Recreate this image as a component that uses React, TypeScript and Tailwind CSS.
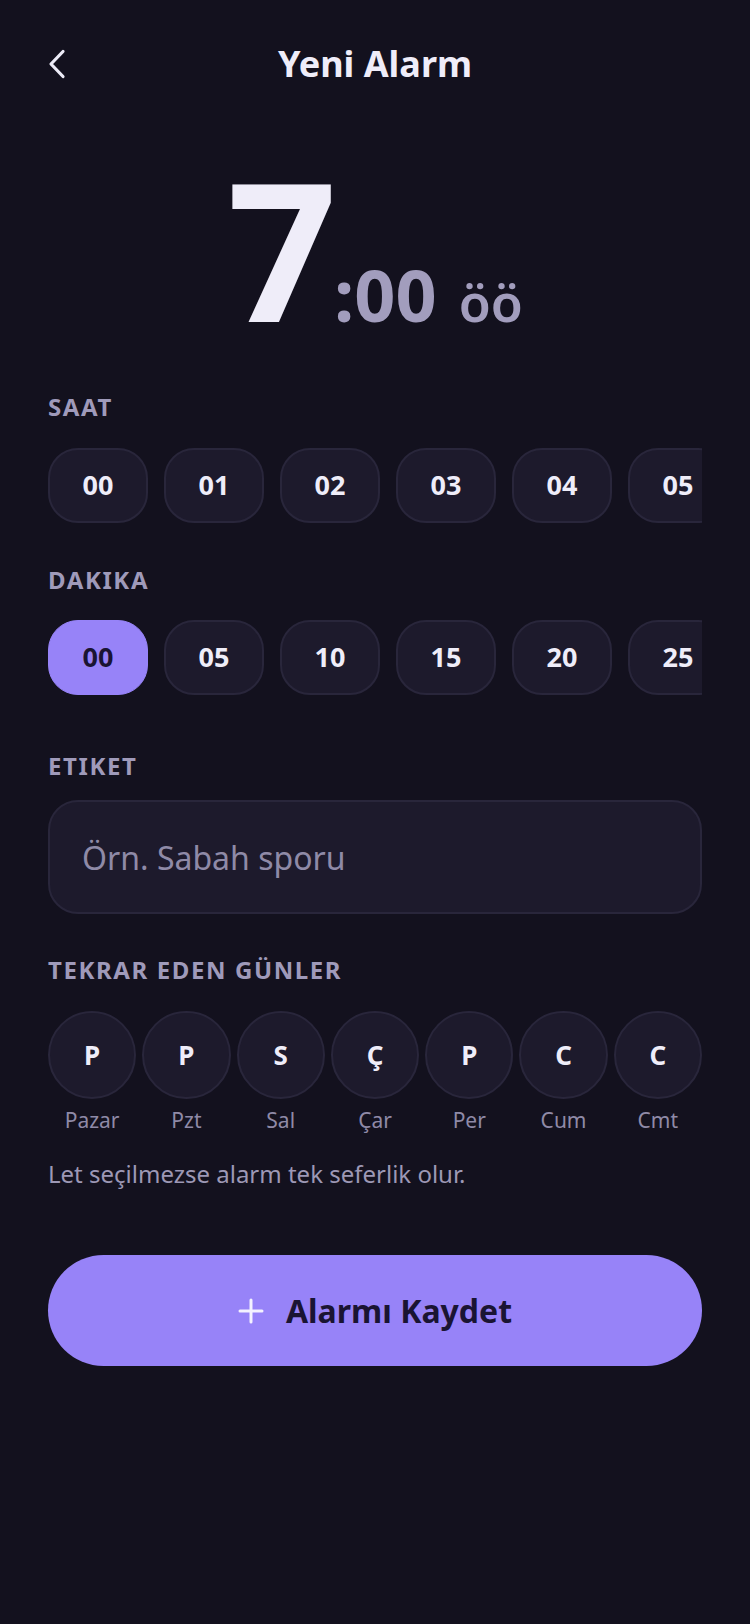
import { useState } from "react";

const HOURS = ["00", "01", "02", "03", "04", "05", "06", "07"];
const MINUTES = ["00", "05", "10", "15", "20", "25", "30", "35"];
const DAYS = [
  { short: "P", label: "Pazar" },
  { short: "P", label: "Pzt" },
  { short: "S", label: "Sal" },
  { short: "Ç", label: "Çar" },
  { short: "P", label: "Per" },
  { short: "C", label: "Cum" },
  { short: "C", label: "Cmt" },
];

function SectionLabel({ children }: { children: React.ReactNode }) {
  return (
    <div className="text-[24px] leading-none font-bold tracking-[1.6px] text-[#9f9aba]">
      {children}
    </div>
  );
}

function ChipRow({
  items,
  selected,
  onSelect,
}: {
  items: string[];
  selected: string | null;
  onSelect: (v: string) => void;
}) {
  return (
    <div className="flex gap-4 overflow-hidden">
      {items.map((item) => {
        const active = item === selected;
        return (
          <button
            key={item}
            onClick={() => onSelect(item)}
            className={
              active
                ? "shrink-0 w-[100px] h-[75px] rounded-[30px] bg-[#9783f8] border border-[#9783f8] text-[27px] font-bold text-[#1a1433] flex items-center justify-center"
                : "shrink-0 w-[100px] h-[75px] rounded-[30px] bg-[#1d1a2c] border-2 border-[#29263b] text-[27px] font-bold text-[#efedf9] flex items-center justify-center"
            }
          >
            {item}
          </button>
        );
      })}
    </div>
  );
}

export default function App() {
  const [hour, setHour] = useState<string | null>(null);
  const [minute, setMinute] = useState<string | null>("00");
  const [label, setLabel] = useState("");
  const [days, setDays] = useState<number[]>([]);

  const toggleDay = (i: number) =>
    setDays((d) => (d.includes(i) ? d.filter((x) => x !== i) : [...d, i]));

  return (
    <main
      className="min-h-[1624px] bg-[#13111e] px-12"
      style={{ fontFamily: '"Noto Sans", "Open Sans", sans-serif' }}
    >
      {/* Header */}
      <div className="pt-9 h-[92px] grid grid-cols-[1fr_auto_1fr] items-center">
        <button className="justify-self-start h-[56px] flex items-center">
          <svg width="18" height="30" viewBox="0 0 18 30" fill="none">
            <path
              d="M15 2.5 L3 15 L15 27.5"
              stroke="#ecebf7"
              strokeWidth="3.2"
              strokeLinecap="round"
              strokeLinejoin="round"
            />
          </svg>
        </button>
        <h1 className="h-[56px] flex items-center text-[36px] leading-none font-bold text-[#efedf9]">
          Yeni Alarm
        </h1>
        <div />
      </div>

      {/* Time */}
      <div className="mt-[60px] flex items-baseline justify-center text-[#a29dbd]">
        <span className="text-[192px] leading-none font-bold text-[#efedf9]">7</span>
        <span className="ml-[-3px] text-[72px] leading-none font-bold">:{minute ?? "00"}</span>
        <span className="ml-[22px] text-[52px] leading-none font-semibold">öö</span>
      </div>

      {/* Hours */}
      <div className="mt-[51px]">
        <SectionLabel>SAAT</SectionLabel>
      </div>
      <div className="mt-[29px]">
        <ChipRow items={HOURS} selected={hour} onSelect={setHour} />
      </div>

      {/* Minutes */}
      <div className="mt-[45px]">
        <SectionLabel>DAKIKA</SectionLabel>
      </div>
      <div className="mt-[28px]">
        <ChipRow items={MINUTES} selected={minute} onSelect={setMinute} />
      </div>

      {/* Label */}
      <div className="mt-[59px]">
        <SectionLabel>ETIKET</SectionLabel>
      </div>
      <input
        value={label}
        onChange={(e) => setLabel(e.target.value)}
        placeholder="Örn. Sabah sporu"
        className="mt-[22px] w-full h-[114px] rounded-[30px] bg-[#1d1a2c] border-2 border-[#29263b] px-[32px] text-[32px] text-[#efedf9] placeholder:text-[#8f8aa7] outline-none"
      />

      {/* Days */}
      <div className="mt-[44px]">
        <SectionLabel>TEKRAR EDEN GÜNLER</SectionLabel>
      </div>
      <div className="mt-[29px] grid grid-cols-7 gap-[6px]">
        {DAYS.map((d, i) => {
          const on = days.includes(i);
          return (
            <div key={d.label} className="flex flex-col items-center">
              <button
                onClick={() => toggleDay(i)}
                className={
                  on
                    ? "w-full aspect-square rounded-full bg-[#9783f8] border-2 border-[#9783f8] text-[26px] font-bold text-[#1a1433] flex items-center justify-center"
                    : "w-full aspect-square rounded-full bg-[#1d1a2c] border-2 border-[#29263b] text-[26px] font-bold text-[#efedf9] flex items-center justify-center"
                }
              >
                {d.short}
              </button>
              <span className="mt-[11px] text-[21px] leading-none text-[#8f8aa7]">{d.label}</span>
            </div>
          );
        })}
      </div>

      <p className="mt-[31px] text-[24px] leading-none text-[#9d98b5]">
        Let seçilmezse alarm tek seferlik olur.
      </p>

      {/* Save */}
      <button className="mt-[69px] w-full h-[111px] rounded-full bg-[#9783f8] flex items-center justify-center gap-[22px]">
        <svg width="26" height="26" viewBox="0 0 26 26" fill="none">
          <path d="M13 2 V24 M2 13 H24" stroke="#f4f2ff" strokeWidth="3" strokeLinecap="round" />
        </svg>
        <span className="text-[32px] leading-none font-bold text-[#1a1433]">Alarmı Kaydet</span>
      </button>
    </main>
  );
}
